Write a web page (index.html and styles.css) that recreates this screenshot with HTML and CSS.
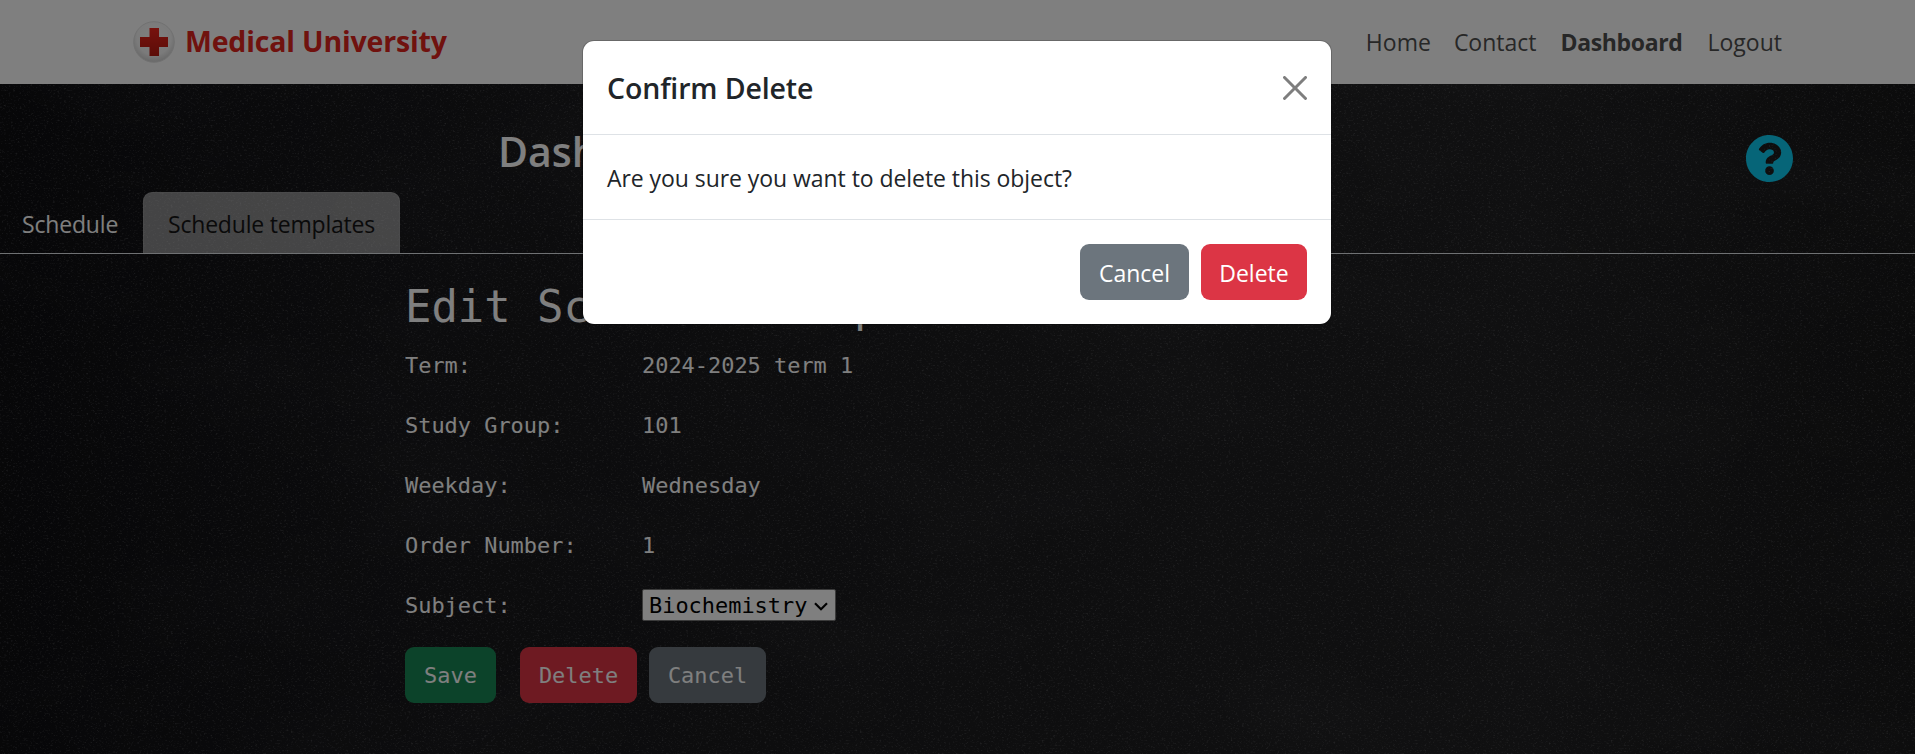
FILE: index.html
```html
<!DOCTYPE html>
<html lang="en">
<head>
<meta charset="utf-8">
<title>Medical University</title>
<link rel="stylesheet" href="styles.css">
</head>
<body>
<svg class="grain" width="1915" height="754" aria-hidden="true">
  <filter id="dust" x="0" y="0" width="100%" height="100%">
    <feTurbulence type="fractalNoise" baseFrequency="0.45 0.6" numOctaves="3" seed="7"/>
    <feColorMatrix values="0 0 0 0 0.75  0 0 0 0 0.75  0 0 0 0 0.78  2.4 0 0 0 -1.35"/>
  </filter>
  <filter id="smears" x="0" y="0" width="100%" height="100%">
    <feTurbulence type="fractalNoise" baseFrequency="0.004 0.009" numOctaves="3" seed="12"/>
    <feColorMatrix values="0 0 0 0 0.7  0 0 0 0 0.7  0 0 0 0 0.75  0.5 0 0 0 -0.22"/>
  </filter>
  <rect width="100%" height="100%" filter="url(#smears)" opacity="0.12"/>
  <rect width="100%" height="100%" filter="url(#dust)" opacity="0.24"/>
</svg>
<div class="page">
  <header class="navbar">
    <a class="brand">
      <svg class="logo" viewBox="0 0 42 42">
        <defs>
          <radialGradient id="disc" cx=".5" cy=".4" r=".6">
            <stop offset="0" stop-color="#fff"/><stop offset=".7" stop-color="#f6f6f6"/><stop offset="1" stop-color="#d0d0d0"/>
          </radialGradient>
          <linearGradient id="cross" x1="0" y1="0" x2="0" y2="1">
            <stop offset="0" stop-color="#f0251c"/><stop offset="1" stop-color="#b81a10"/>
          </linearGradient>
        </defs>
        <circle cx="21" cy="21" r="20.3" fill="url(#disc)" stroke="#e2e2e2"/>
        <path d="M16.500 7h9.500v9h9v10h-9v9h-9.500v-9h-9.500v-10h9.500z" fill="url(#cross)"/>
      </svg>
      <span class="brand-name">Medical University</span>
    </a>
    <nav class="links">
      <a class="home">Home</a>
      <a class="contact">Contact</a>
      <a class="active">Dashboard</a>
      <a class="logout">Logout</a>
    </nav>
  </header>
  <div class="title-row">
    <h3>Dashboard</h3>
    <svg class="help" viewBox="8 8 496 496"><path d="M504 256c0 136.997-111.043 248-248 248S8 392.997 8 256C8 119.083 119.043 8 256 8s248 111.083 248 248zM262.655 90c-54.497 0-89.255 22.957-116.549 63.758-3.536 5.286-2.353 12.415 2.715 16.258l34.699 26.31c5.205 3.947 12.621 3.008 16.665-2.122 17.864-22.658 30.113-35.797 57.303-35.797 20.429 0 45.698 13.148 45.698 32.958 0 14.976-12.363 22.667-32.534 33.976C247.128 238.528 216 254.941 216 296v4c0 6.627 5.373 12 12 12h56c6.627 0 12-5.373 12-12v-1.333c0-28.462 83.186-29.647 83.186-106.667 0-58.002-60.165-102-116.531-102zM256 338c-25.365 0-46 20.635-46 46 0 25.364 20.635 46 46 46s46-20.636 46-46c0-25.365-20.635-46-46-46z"/></svg>
  </div>
  <div class="tabs">
    <a class="tab">Schedule</a>
    <a class="tab current">Schedule templates</a>
  </div>
  <main class="form">
    <h1>Edit Schedule Template</h1>
    <div class="row"><span>Term:</span><span>2024-2025 term 1</span></div>
    <div class="row"><span>Study Group:</span><span>101</span></div>
    <div class="row"><span>Weekday:</span><span>Wednesday</span></div>
    <div class="row"><span>Order Number:</span><span>1</span></div>
    <div class="row"><span>Subject:</span>
      <span class="select">Biochemistry<svg viewBox="0 0 14 9"><path d="M1 1.200l6 6 6-6" fill="none" stroke="#000" stroke-width="2.200"/></svg></span>
    </div>
    <div class="actions">
      <button class="btn mono save">Save</button>
      <button class="btn mono danger">Delete</button>
      <button class="btn mono secondary">Cancel</button>
    </div>
  </main>
</div>
<div class="backdrop">
  <div class="modal">
    <div class="modal-header">
      <h5>Confirm Delete</h5>
      <svg class="close" viewBox="0 0 16 16"><path d="M.293.293a1 1 0 0 1 1.414 0L8 6.586 14.293.293a1 1 0 1 1 1.414 1.414L9.414 8l6.293 6.293a1 1 0 0 1-1.414 1.414L8 9.414l-6.293 6.293a1 1 0 0 1-1.414-1.414L6.586 8 .293 1.707a1 1 0 0 1 0-1.414"/></svg>
    </div>
    <div class="modal-body"><span>Are you sure you want to delete this object?</span></div>
    <div class="modal-footer">
      <button class="btn secondary cancel">Cancel</button>
      <button class="btn danger delete">Delete</button>
    </div>
  </div>
</div>
</body>
</html>
```
FILE: styles.css
```css
* { box-sizing: border-box; }
body {
  margin: 0;
  height: 754px;
  overflow: hidden;
  position: relative;
  font: 23px/36px "Open Sans", "Noto Sans", sans-serif;
  color: #fff;
  background: linear-gradient(90deg, #0e0e11 0, #17171a 20%, #1d1d1f 55%, #202022 80%, #171718 100%);
}
.grain { position: absolute; inset: 0; }
.page { position: relative; }
h1, h3, h5 { margin: 0; }

.navbar {
  height: 84px;
  padding: 0 133px 0 133px;
  display: flex;
  justify-content: space-between;
  align-items: center;
  background: #fff;
}
.brand { display: flex; align-items: center; gap: 10px; }
.logo { width: 42px; height: 42px; }
.brand-name { padding-bottom: 2px; font-size: 28.5px; font-weight: 700; color: #e0241c; letter-spacing: -0.17px; }
.links { display: flex; gap: 24px; color: #4f4f4f; }
.links .home { margin-right: -1px; }
.links .active { margin-right: 1px; font-weight: 700; letter-spacing: -0.35px; }

.title-row {
  height: 108px;
  padding: 0 122px 0 498px;
  display: flex;
  justify-content: space-between;
}
.title-row h3 { font-size: 41px; font-weight: 600; line-height: 50px; padding-top: 42px; }
.help { width: 47px; height: 47px; margin-top: 50.5px; fill: #0dcaf0; }

.tabs { height: 62px; display: flex; white-space: nowrap; border-bottom: 1px solid #dee2e6; }
.tab { width: 143px; padding: 14px 0 0 22px; letter-spacing: -0.17px; }
.tab.current {
  width: 257px;
  padding: 13px 0 0 24px;
  letter-spacing: -0.2px;
  color: #141414;
  background: rgba(255, 255, 255, 0.5);
  border: 1px solid rgba(255, 255, 255, 0.08);
  border-bottom: 0;
  border-radius: 9px 9px 0 0;
}

.form { padding: 24px 0 0 405px; font-family: "DejaVu Sans Mono", monospace; font-size: 21.93px; }
.form h1 { font-weight: 400; font-size: 43.86px; line-height: 58px; margin-bottom: 12px; }
.row { display: flex; height: 60px; line-height: 36px; }
.row > span:first-child { width: 237px; }
.select {
  height: 32px;
  width: 194px;
  margin-top: 1px;
  padding: 2px 7px 0 6px;
  display: flex;
  align-items: center;
  justify-content: space-between;
  color: #000;
  background: #fff;
  border: 1px solid #767676;
  border-radius: 2px;
}
.select svg { width: 14px; height: 9px; }
.actions { margin-top: -1px; display: flex; gap: 12px; }
.btn {
  height: 56px;
  padding: 2px 0 0;
  border: 0;
  border-radius: 9px;
  color: #fff;
  font: 23px/36px "Open Sans", "Noto Sans", sans-serif;
}
.btn.mono { width: 117px; font-family: "DejaVu Sans Mono", monospace; font-size: 21.93px; }
.btn.save { width: 91px; margin-right: 12px; background: #198754; }
.danger { background: #dc3545; }
.secondary { background: #6c757d; }

.backdrop { position: absolute; inset: 0; padding: 40px 1px 0 0; background: rgba(0, 0, 0, 0.5); }
.modal {
  width: 750px;
  height: 285px;
  margin: 0 auto;
  color: #212529;
  background: #fff;
  background-clip: padding-box;
  border: 1px solid rgba(0, 0, 0, 0.175);
  border-radius: 12px;
}
.modal-header {
  height: 94px;
  padding: 0 24px;
  display: flex;
  align-items: center;
  justify-content: space-between;
  border-bottom: 1px solid #dee2e6;
}
.modal-header h5 { padding-top: 1px; font-size: 28.5px; font-weight: 600; letter-spacing: -0.13px; }
.close { width: 24px; height: 24px; opacity: 0.5; }
.modal-body { height: 85px; padding: 25px 24px; letter-spacing: -0.06px; border-bottom: 1px solid #dee2e6; }
.modal-footer { padding: 24px 24px 0; display: flex; justify-content: flex-end; gap: 12px; }
.cancel { width: 109px; }
.delete { width: 106px; }
```
